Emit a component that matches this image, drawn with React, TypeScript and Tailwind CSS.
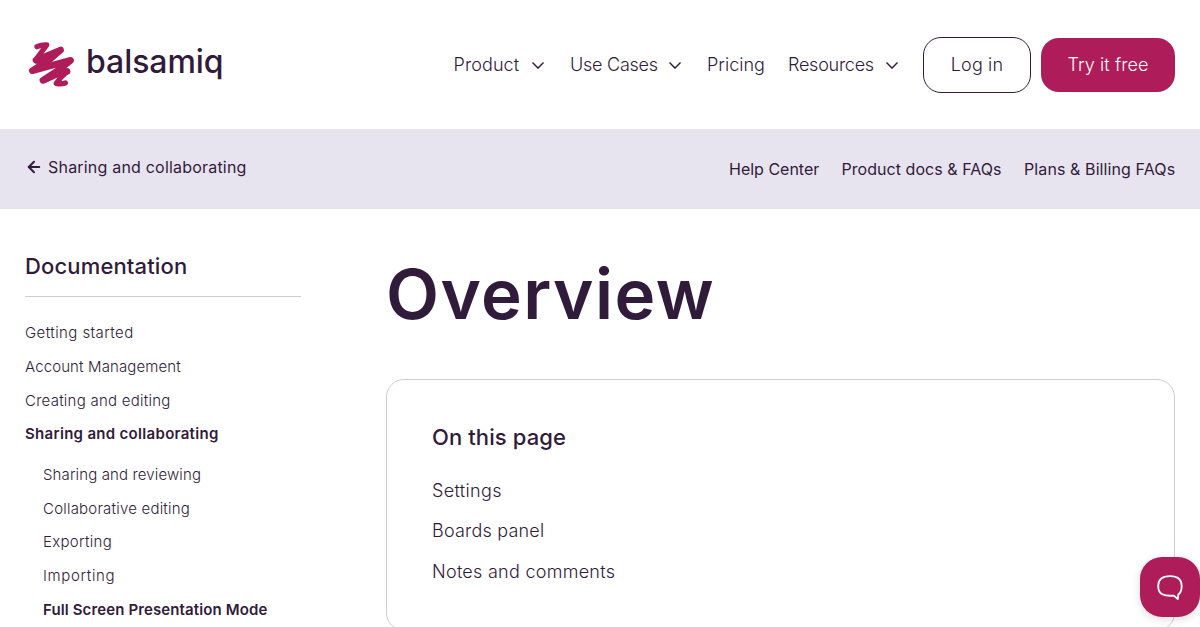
import { ArrowLeft } from 'lucide-react';

const navItems = [
  { label: 'Product', menu: true, box: 'w-[78.5px]', track: 'tracking-[0.1px]', gap: 'mr-[26px]' },
  { label: 'Use Cases', menu: true, box: 'w-[99px]', track: 'tracking-[-0.25px]', gap: 'mr-[26px]' },
  { label: 'Pricing', menu: false, box: 'w-[58px]', track: 'tracking-normal', gap: 'mr-[23px]' },
  { label: 'Resources', menu: true, box: 'w-[98px]', track: 'tracking-[-0.25px]', gap: 'mr-[25px]' },
];

const helpLinks = [
  { label: 'Help Center', box: 'w-[90px]', track: 'tracking-normal' },
  { label: 'Product docs & FAQs', box: 'w-[160px]', track: 'tracking-[0.05px]' },
  { label: 'Plans & Billing FAQs', box: 'w-[151px]', track: 'tracking-[0.1px]' },
];

const sections = [
  { label: 'Getting started', style: 'font-light tracking-[0.42px]' },
  { label: 'Account Management', style: 'font-light tracking-[0.12px]' },
  { label: 'Creating and editing', style: 'font-light tracking-[0.25px]' },
  { label: 'Sharing and collaborating', style: 'font-semibold tracking-[0.31px]' },
];

const subsections = [
  { label: 'Sharing and reviewing', style: 'font-light tracking-[0.13px]' },
  { label: 'Collaborative editing', style: 'font-light tracking-[0.21px]' },
  { label: 'Exporting', style: 'font-light tracking-[0.3px]' },
  { label: 'Importing', style: 'font-light tracking-[0.65px]' },
  { label: 'Full Screen Presentation Mode', style: 'font-semibold tracking-[0.12px]' },
];

const pageLinks = [
  { label: 'Settings', style: 'tracking-[0.35px]' },
  { label: 'Boards panel', style: 'tracking-[0.2px]' },
  { label: 'Notes and comments', style: 'tracking-[0.27px]' },
];

function Logo() {
  return (
    <a href="#" className="flex items-center">
      <svg
        viewBox="20 12 147 144"
        className="h-12 w-[49px]"
        fill="none"
        stroke="#ae1c59"
        strokeLinecap="round"
        strokeLinejoin="round"
      >
        <path strokeWidth="16" d="M50 29Q64 23 79 24L68 39L46 69" />
        <path strokeWidth="20" d="M47 70L121 39L88 67L36 101L85 88L151 70L116 98L68 130L106 113L140 103" />
        <path strokeWidth="16" d="M141 103L121 122L108 139Q121 143 135 138" />
      </svg>
      <span className="-mt-[5px] ml-[10px] font-['Inter'] text-[32px] leading-[48px] font-medium tracking-[-0.05px]">
        balsamiq
      </span>
    </a>
  );
}

export default function App() {
  return (
    <div className="relative h-[627px] w-[1200px] overflow-hidden bg-white font-['Inter',sans-serif] whitespace-nowrap text-[#311b3b]">
      <header className="flex h-[129px] items-center justify-between pr-[25px] pl-[27px]">
        <Logo />
        <nav className="flex items-center text-[18px] font-light">
          {navItems.map((item) => (
            <a key={item.label} href="#" className={`flex items-center ${item.gap}`}>
              <span className={`${item.box} ${item.track}`}>{item.label}</span>
              {item.menu && (
                <svg viewBox="0 0 12 7" className="mt-[2px] h-[7px] w-3" fill="none" stroke="currentColor" strokeWidth="1.4">
                  <path d="M.5 .6 6 6.1 11.5 .6" />
                </svg>
              )}
            </a>
          ))}
          <a href="#" className="flex h-14 w-[108px] items-center justify-center rounded-[18px] border border-[#311b3b] tracking-[0.15px]">
            Log in
          </a>
          <a href="#" className="ml-[10px] flex h-[54px] w-[134px] items-center justify-center rounded-[18px] bg-[#ae1c59] tracking-[0.1px] text-white">
            Try it free
          </a>
        </nav>
      </header>

      <div className="flex h-20 items-center justify-between bg-[#e8e4ef] px-[25px] text-[16px]">
        <a href="#" className="flex items-center pb-1">
          <ArrowLeft size={18} strokeWidth={2.6} />
          <span className="ml-[5px] tracking-[0.2px]">Sharing and collaborating</span>
        </a>
        <div className="flex gap-[22.5px]">
          {helpLinks.map((link) => (
            <a key={link.label} href="#" className={`${link.box} ${link.track}`}>
              {link.label}
            </a>
          ))}
        </div>
      </div>

      <main className="flex pl-[25px]">
        <aside className="w-[276px] pt-[43px] text-[15px]">
          <h2 className="border-b border-[#d0cbd4] pb-[15px] text-[22px] leading-[29px] font-medium tracking-[0.15px]">
            Documentation
          </h2>
          <ul className="pt-[19.4px]">
            {sections.map((item) => (
              <li key={item.label} className={`h-[33.7px] leading-[34px] ${item.style}`}>
                {item.label}
              </li>
            ))}
          </ul>
          <ul className="pt-[6.8px] pl-[18px]">
            {subsections.map((item) => (
              <li key={item.label} className={`h-[33.7px] leading-[34px] ${item.style}`}>
                {item.label}
              </li>
            ))}
          </ul>
        </aside>

        <section className="ml-[85px] w-[789px] pt-[41px]">
          <h1 className="h-[129px] text-[69px] leading-[89px] font-semibold tracking-[1.4px]">Overview</h1>
          <div className="h-[252px] rounded-[18px] border border-[#d0cbd4] pt-[42px] pl-[45px]">
            <h2 className="text-[22px] leading-[30px] font-medium tracking-[0.1px]">On this page</h2>
            <ul className="mt-[18.6px] text-[18px] font-light">
              {pageLinks.map((link) => (
                <li key={link.label} className={`h-[40.5px] leading-[40px] ${link.style}`}>
                  {link.label}
                </li>
              ))}
            </ul>
          </div>
        </section>
      </main>

      <button className="absolute top-[557px] left-[1140px] flex size-[60px] items-center justify-center rounded-[22px] bg-[#ae1c59] shadow-[0_2px_8px_rgba(0,0,0,0.15)]">
        <svg viewBox="0 0 28 28" className="size-7" fill="none" stroke="white" strokeWidth="1.8" strokeLinejoin="round">
          <path d="M14 3.2C20.5 3.2 25.7 5 25.7 13C25.7 17 24.5 20 22.3 21.6L21.8 26.2L17.8 22.6C8 23.3 2.2 21.7 2.2 13C2.2 5 7.5 3.2 14 3.2Z" />
        </svg>
      </button>
    </div>
  );
}
